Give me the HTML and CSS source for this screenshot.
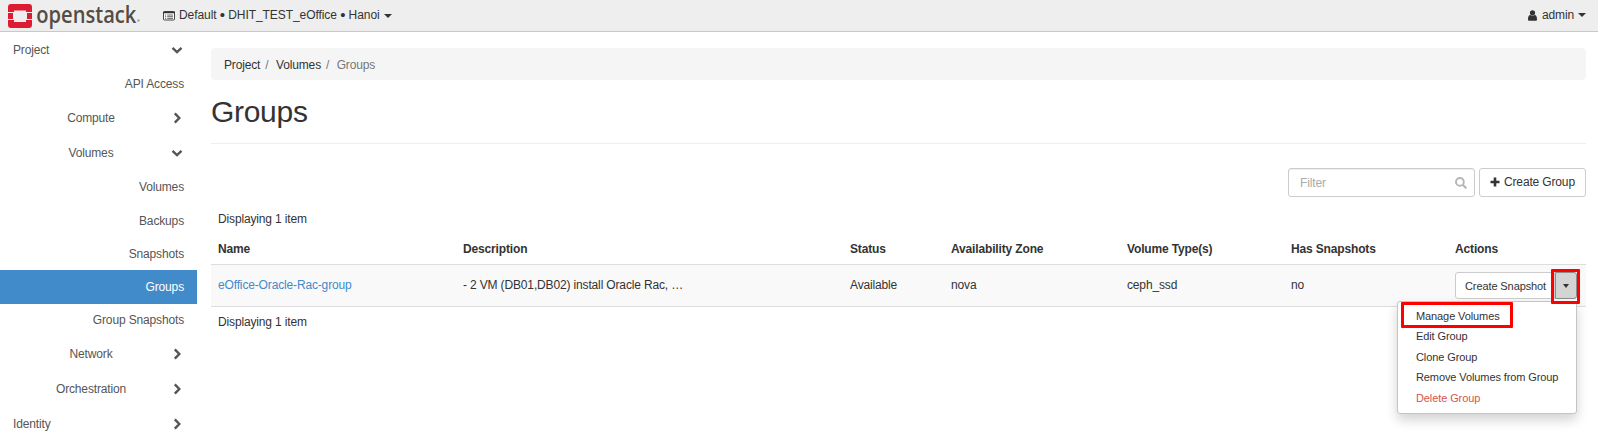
FILE: index.html
```html
<!DOCTYPE html>
<html lang="en">
<head>
<meta charset="utf-8">
<title>Groups - OpenStack Dashboard</title>
<link rel="stylesheet" href="styles.css">
</head>
<body>
<svg class="defs" width="0" height="0">
  <symbol id="down" viewBox="0 0 12 12"><path d="M1.500 3.800 6 8.100l4.500-4.300" fill="none" stroke="currentColor" stroke-width="2.400"/></symbol>
  <symbol id="right" viewBox="0 0 12 12"><path d="M3.800 1.300 8.300 6l-4.500 4.700" fill="none" stroke="currentColor" stroke-width="2.400"/></symbol>
</svg>
<header class="topbar">
  <svg class="logo" width="135" height="30" viewBox="0 0 135 30">
    <path fill="#dd1c32" d="M3 3h18a3 3 0 0 1 3 3v5h-6V9.500H6V11H0V6a3 3 0 0 1 3-3zM0 12h5v6H0zM19 12h5v6h-5zM0 19h6v2h12v-2h6v5a3 3 0 0 1-3 3H3a3 3 0 0 1-3-3z"/>
    <text class="wordmark" x="28.300" y="21.500" textLength="100" lengthAdjust="spacingAndGlyphs">openstack</text>
    <circle cx="130.500" cy="19.500" r="1.200" fill="#a5a19e"/>
  </svg>
  <div class="context">
    <svg width="12" height="10" viewBox="0 0 12 10"><rect x=".5" y=".5" width="11" height="8.500" rx=".8" fill="#fff" stroke="#444"/><path d="M0 1.500h12" stroke="#333" stroke-width="1.500"/><path d="M2 4h1.200M4.200 4H10M2 5.700h1.200M4.200 5.700H10M2 7.400h1.200M4.200 7.400H10" stroke="#555" stroke-width=".9"/></svg>
    <span class="context-name">Default <b class="dot">•</b> DHIT_TEST_eOffice <b class="dot">•</b> Hanoi</span>
    <i class="caret"></i>
  </div>
  <div class="user">
    <svg width="9" height="11" viewBox="0 0 9 11"><circle cx="4.500" cy="2.800" r="2.600" fill="#333"/><path d="M0 9.500C0 6.500.8 5 2.200 5c1.300 1 3.300 1 4.600 0C8.200 5 9 6.500 9 9.500c0 .8-.5 1.300-1.300 1.300H1.300C.5 10.800 0 10.300 0 9.500z" fill="#333"/></svg>
    <span>admin</span>
    <i class="caret"></i>
  </div>
</header>
<div class="layout">
  <nav class="sidebar">
    <div class="item"><span>Project</span><svg class="chev"><use href="#down"/></svg></div>
    <div class="item leaf">API Access</div>
    <div class="item group"><span>Compute</span><svg class="chev"><use href="#right"/></svg></div>
    <div class="item group tall"><span>Volumes</span><svg class="chev"><use href="#down"/></svg></div>
    <div class="item leaf">Volumes</div>
    <div class="item leaf short">Backups</div>
    <div class="item leaf short">Snapshots</div>
    <div class="item leaf active">Groups</div>
    <div class="item leaf short raised">Group Snapshots</div>
    <div class="item group"><span>Network</span><svg class="chev"><use href="#right"/></svg></div>
    <div class="item group tall"><span>Orchestration</span><svg class="chev"><use href="#right"/></svg></div>
    <div class="item tall"><span>Identity</span><svg class="chev"><use href="#right"/></svg></div>
  </nav>
  <main class="content">
    <div class="breadcrumb"><span>Project</span><span class="sep">/</span><span>Volumes</span><span class="sep">/</span><span class="current">Groups</span></div>
    <h1>Groups</h1>
    <div class="toolbar">
      <div class="filter"><span>Filter</span><svg width="12" height="12" viewBox="0 0 12 12"><circle cx="4.900" cy="4.900" r="3.900" fill="none" stroke="#b5b5b5" stroke-width="1.900"/><path d="m7.800 7.800 3.500 3.500" stroke="#b5b5b5" stroke-width="2.200"/></svg></div>
      <div class="create"><svg width="10" height="10" viewBox="0 0 10 10"><path d="M5 .5v9M.5 5h9" stroke="#333" stroke-width="2.600"/></svg><span>Create Group</span></div>
    </div>
    <div class="count">Displaying 1 item</div>
    <div class="row head"><span>Name</span><span>Description</span><span>Status</span><span>Availability Zone</span><span>Volume Type(s)</span><span>Has Snapshots</span><span>Actions</span></div>
    <div class="row body">
      <span class="link">eOffice-Oracle-Rac-group</span><span>- 2 VM (DB01,DB02) install Oracle Rac, …</span><span>Available</span><span>nova</span><span>ceph_ssd</span><span>no</span>
      <div class="actions">
        <div class="snapshot">Create Snapshot</div><div class="toggle"><i class="caret small"></i></div>
        <div class="menu">
          <div>Manage Volumes</div><div>Edit Group</div><div>Clone Group</div><div>Remove Volumes from Group</div><div class="danger">Delete Group</div>
          <div class="menu-mark"></div>
        </div>
        <div class="toggle-mark"></div>
      </div>
    </div>
    <div class="count foot">Displaying 1 item</div>
  </main>
</div>
</body>
</html>
```
FILE: styles.css
```css
* { box-sizing: border-box; }
body {
  margin: 0;
  height: 438px;
  overflow: hidden;
  background: #fff;
  color: #333;
  font: 12px/16px "Liberation Sans", Arial, sans-serif;
  letter-spacing: -.15px;
  white-space: nowrap;
}
svg { display: block; flex: none; }
.defs { position: absolute; }

.topbar {
  display: flex;
  align-items: center;
  height: 32px;
  padding: 0 12px 0 8px;
  background: #eee;
  border-bottom: 1px solid #c8c8c8;
}
.logo { overflow: visible; }
.wordmark {
  font: 600 22.500px "Open Sans", sans-serif;
  letter-spacing: 0;
  fill: #544c46;
}
.context { display: flex; align-items: center; margin-left: 20px; padding-top: 1px; }
.context-name { margin: -2px 4px 0 4px; letter-spacing: -.07px; }
.dot { font-size: 15px; font-weight: 400; line-height: 12px; vertical-align: -1px; }
.user { display: flex; align-items: center; gap: 5px; margin-left: auto; margin-top: -2px; }
.user svg { margin-top: 2px; }
.user .caret { margin-left: -1px; }
.caret {
  border: 4px solid transparent;
  border-top-color: #333;
  border-bottom: 0;
}
.caret.small { border-width: 4px 3.500px 0; }

.layout { display: flex; }
.sidebar { width: 197px; padding-top: 1px; color: #555; }
.item {
  display: flex;
  align-items: center;
  justify-content: space-between;
  height: 34px;
  padding: 0 14px 0 13px;
}
.item.short { height: 33px; }
.item.tall { height: 35px; }
.item.leaf { justify-content: flex-end; padding-right: 13px; }
.item.raised { padding-bottom: 1px; }
.item.group { padding-left: 11px; }
.group span { flex: 1; text-align: center; }
.active { background: #428bca; color: #fff; }
.chev { width: 12px; height: 12px; }

.content { width: 1375px; margin-left: 14px; padding-top: 16px; }
.breadcrumb {
  display: flex;
  align-items: center;
  height: 32px;
  padding: 1px 0 0 13px;
  background: #f5f5f5;
  border-radius: 4px;
}
.sep { margin: 0 7.500px 0 5px; color: #777; }
.current { color: #777; }
h1 {
  height: 64px;
  margin: 0;
  padding-top: 15px;
  border-bottom: 1px solid #eee;
  font-size: 30px;
  font-weight: 400;
  line-height: 33px;
  letter-spacing: -.3px;
}
.toolbar { display: flex; justify-content: flex-end; gap: 4px; margin-top: 24px; }
.filter, .create {
  display: flex;
  align-items: center;
  height: 29px;
  border: 1px solid #ccc;
  border-radius: 3px;
}
.filter {
  justify-content: space-between;
  width: 187px;
  padding: 0 7px 0 11px;
  color: #aaa;
  box-shadow: inset 0 1px 1px rgba(0, 0, 0, .075);
}
.create { width: 107px; padding: 0 0 2px 10px; gap: 4px; }
.count { height: 16px; margin-top: 14px; padding-left: 7px; }
.foot { margin-top: 7px; }
.row {
  display: grid;
  grid-template-columns: 245px 387px 101px 176px 164px 164px 138px;
  border-bottom: 1px solid #ddd;
}
.row > * { padding-left: 7px; }
.head { height: 38px; padding-top: 14px; font-weight: 700; }
.body { height: 42px; background: #f9f9f9; }
.body > span { padding-top: 12px; }
.link { color: #428bca; }

.actions { position: relative; display: flex; padding-top: 7px; font-size: 11px; letter-spacing: -.1px; }
.snapshot {
  width: 100px;
  height: 27px;
  padding-left: 9px;
  background: #fff;
  border: 1px solid #ccc;
  border-radius: 3px 0 0 3px;
  line-height: 26px;
}
.toggle {
  display: flex;
  align-items: center;
  justify-content: center;
  width: 22px;
  height: 27px;
  background: #d4d4d4;
  border: 1px solid #8c8c8c;
  border-radius: 0 3px 3px 0;
}
.toggle-mark {
  position: absolute;
  left: 103px;
  top: 4px;
  width: 29px;
  height: 35px;
  border: 3px solid #f00;
  border-radius: 1px;
}
.menu {
  position: absolute;
  right: 9px;
  top: 36px;
  width: 180px;
  height: 113px;
  padding: 4px 0 0 18px;
  background: #fff;
  border: 1px solid #c4c4c4;
  border-radius: 3px;
  box-shadow: 0 6px 12px rgba(0, 0, 0, .175);
  line-height: 20.400px;
}
.danger { color: #d9534f; }
.menu-mark {
  position: absolute;
  left: 3px;
  top: 0;
  width: 112px;
  height: 26px;
  border: 3px solid #f00;
  border-radius: 1px;
}
```
